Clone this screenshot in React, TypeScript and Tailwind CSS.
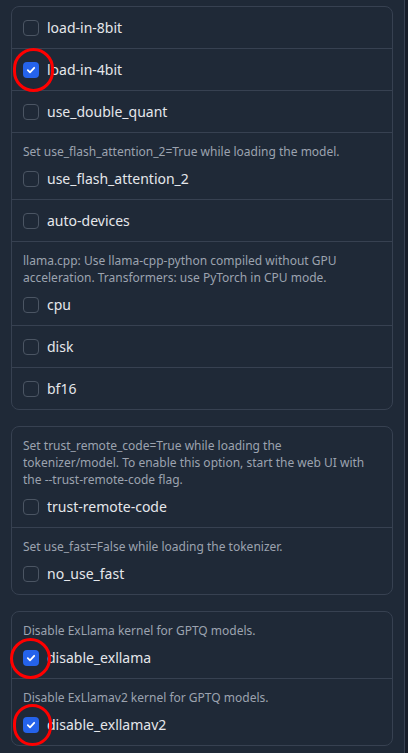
import React from "react";

type Circle = { l: number; t: number; w: number; h: number };
type Row = { info?: string; label: string; checked?: boolean; circle?: Circle };

const panels: Row[][] = [
  [
    { label: "load-in-8bit" },
    { label: "load-in-4bit", checked: true, circle: { l: -10, t: -14, w: 41, h: 44 } },
    { label: "use_double_quant" },
    { info: "Set use_flash_attention_2=True while loading the model.", label: "use_flash_attention_2" },
    { label: "auto-devices" },
    {
      info: "llama.cpp: Use llama-cpp-python compiled without GPU acceleration. Transformers: use PyTorch in CPU mode.",
      label: "cpu",
    },
    { label: "disk" },
    { label: "bf16" },
  ],
  [
    {
      info: "Set trust_remote_code=True while loading the tokenizer/model. To enable this option, start the web UI with the --trust-remote-code flag.",
      label: "trust-remote-code",
    },
    { info: "Set use_fast=False while loading the tokenizer.", label: "no_use_fast" },
  ],
  [
    {
      info: "Disable ExLlama kernel for GPTQ models.",
      label: "disable_exllama",
      checked: true,
      circle: { l: -13, t: -12, w: 41, h: 41 },
    },
    {
      info: "Disable ExLlamav2 kernel for GPTQ models.",
      label: "disable_exllamav2",
      checked: true,
      circle: { l: -10, t: -13, w: 39, h: 42 },
    },
  ],
];

function Checkbox({ checked, circle }: { checked?: boolean; circle?: Circle }) {
  if (checked) {
    return (
      <span className="relative flex h-4 w-4 shrink-0 items-center justify-center rounded-[4px] bg-[#2563eb]">
        <svg width="10" height="10" viewBox="0 0 10 10" fill="none">
          <path d="M1.8 5.2 L4 7.3 L8.2 2.8" stroke="white" strokeWidth="1.8" strokeLinecap="round" strokeLinejoin="round" />
        </svg>
        {circle && (
          <span
            className="pointer-events-none absolute rounded-full border-[3px] border-[#ff0000]"
            style={{ left: circle.l, top: circle.t, width: circle.w, height: circle.h }}
          />
        )}
      </span>
    );
  }
  return <span className="h-4 w-4 shrink-0 rounded-[4px] border border-[#4b5563] bg-[#1f2937]" />;
}

export default function App() {
  return (
    <div className="flex min-h-[753px] w-[408px] bg-[#1f2937]" style={{ fontFamily: '"Noto Sans", "Open Sans", sans-serif' }}>
      <div className="flex w-[404px] flex-col gap-[16px] px-[11px] pt-[6px]">
        {panels.map((rows, pi) => (
          <div key={pi} className="flex flex-col divide-y divide-[#374151] rounded-[8px] border border-[#374151] bg-[#1f2937]">
            {rows.map((r, ri) => (
              <div key={ri} className="flex flex-col gap-[8px] px-[11px] py-[10px]">
                {r.info && <p className="pr-[14px] text-[12px] leading-[17px] text-[#9ca3af]">{r.info}</p>}
                <label className="flex h-[21px] items-center gap-[8px]">
                  <Checkbox checked={r.checked} circle={r.circle} />
                  <span className="text-[14px] leading-[21px] text-[#e5e7eb]">{r.label}</span>
                </label>
              </div>
            ))}
          </div>
        ))}
      </div>
      <div className="w-px bg-[#374151]" />
      <div className="flex-1 bg-[#161d29]" />
    </div>
  );
}
